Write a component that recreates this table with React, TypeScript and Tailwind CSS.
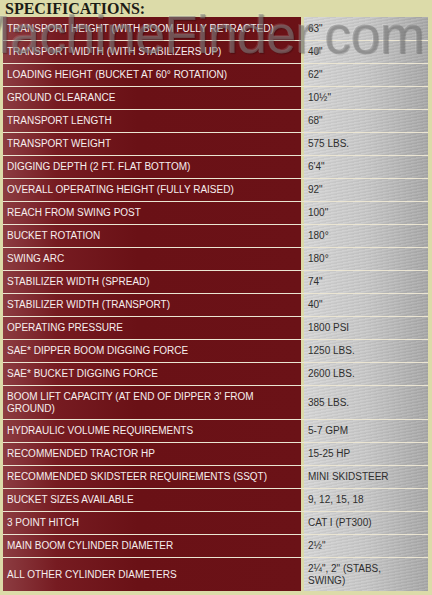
import React from "react";

type Row = { label: string; value: string; tall?: boolean };

const rows: Row[] = [
  { label: "TRANSPORT HEIGHT (WITH BOOM FULLY RETRACTED)", value: "63\"" },
  { label: "TRANSPORT WIDTH (WITH STABILIZERS UP)", value: "40\"" },
  { label: "LOADING HEIGHT (BUCKET AT 60° ROTATION)", value: "62\"" },
  { label: "GROUND CLEARANCE", value: "10½\"" },
  { label: "TRANSPORT LENGTH", value: "68\"" },
  { label: "TRANSPORT WEIGHT", value: "575 LBS." },
  { label: "DIGGING DEPTH (2 FT. FLAT BOTTOM)", value: "6'4\"" },
  { label: "OVERALL OPERATING HEIGHT (FULLY RAISED)", value: "92\"" },
  { label: "REACH FROM SWING POST", value: "100\"" },
  { label: "BUCKET ROTATION", value: "180°" },
  { label: "SWING ARC", value: "180°" },
  { label: "STABILIZER WIDTH (SPREAD)", value: "74\"" },
  { label: "STABILIZER WIDTH (TRANSPORT)", value: "40\"" },
  { label: "OPERATING PRESSURE", value: "1800 PSI" },
  { label: "SAE* DIPPER BOOM DIGGING FORCE", value: "1250 LBS." },
  { label: "SAE* BUCKET DIGGING FORCE", value: "2600 LBS." },
  { label: "BOOM LIFT CAPACITY (AT END OF DIPPER 3' FROM GROUND)", value: "385 LBS.", tall: true },
  { label: "HYDRAULIC VOLUME REQUIREMENTS", value: "5-7 GPM" },
  { label: "RECOMMENDED TRACTOR HP", value: "15-25 HP" },
  { label: "RECOMMENDED SKIDSTEER REQUIREMENTS (SSQT)", value: "MINI SKIDSTEER" },
  { label: "BUCKET SIZES AVAILABLE", value: "9, 12, 15, 18" },
  { label: "3 POINT HITCH", value: "CAT I (PT300)" },
  { label: "MAIN BOOM CYLINDER DIAMETER", value: "2½\"" },
  { label: "ALL OTHER CYLINDER DIAMETERS", value: "2¼\", 2\" (STABS, SWING)", tall: true },
];

export default function App() {
  return (
    <div className="relative w-[432px] h-[595px] overflow-hidden bg-[#dcdba9] font-['Liberation_Sans',Arial,sans-serif]">
      <div className="h-[17px] pl-[5px] font-['Liberation_Serif',serif] font-bold text-[16px] leading-[17px] text-[#1c1c16]">
        SPECIFICATIONS:
      </div>
      <div className="ml-[3px] w-[425px] flex flex-col">
        {rows.map((r, i) => (
          <div
            key={i}
            className={`flex gap-[3px] ${i > 0 ? "border-t border-[#ebe5d2]" : ""} ${r.tall ? "h-[34px]" : "h-[23px]"}`}
          >
            <div className="w-[298px] flex items-center pl-[4px] pr-[2px] text-[10px] leading-[12px] text-[#f6eeee] bg-[linear-gradient(90deg,#8c3c41_0%,#761b21_18%,#6a1116_45%,#6b1217_100%)]">
              {r.label}
            </div>
            <div className="w-[124px] flex items-center pl-[4px] pr-[10px] text-[10px] leading-[12px] text-[#2e2e2e] bg-[repeating-linear-gradient(170deg,rgba(255,255,255,0.07)_0px,rgba(255,255,255,0.07)_1px,rgba(0,0,0,0.04)_2px,rgba(0,0,0,0.04)_3px),linear-gradient(90deg,#d6d6d6_0%,#c8c8c8_50%,#a8a8a8_100%)]">
              {r.value}
            </div>
          </div>
        ))}
      </div>
      <div className="pointer-events-none absolute left-[-34px] top-[7px] whitespace-nowrap font-['Liberation_Sans',Arial,sans-serif] text-[54px] leading-[54px] tracking-[-0.8px] text-[rgba(130,130,130,0.5)] [text-shadow:1px_1px_1px_rgba(0,0,0,0.22),-1px_-1px_0px_rgba(255,255,255,0.12)]">
        MachineFinder.com
      </div>
    </div>
  );
}
